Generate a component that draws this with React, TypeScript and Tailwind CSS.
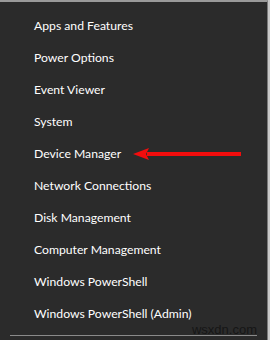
import React from "react";

const items = [
  "Apps and Features",
  "Power Options",
  "Event Viewer",
  "System",
  "Device Manager",
  "Network Connections",
  "Disk Management",
  "Computer Management",
  "Windows PowerShell",
  "Windows PowerShell (Admin)",
];

// red annotation arrow pointing at the menu entry
function Arrow() {
  return (
    <svg width="110" height="14" viewBox="0 0 110 14" className="absolute left-[133px] top-[145px]">
      <rect x="14" y="5" width="94" height="4" fill="#f20d0d" />
      <polygon points="0,7 16,1 13,7 16,13" fill="#f20d0d" />
    </svg>
  );
}

export default function App() {
  return (
    <div className="w-[270px] h-[340px] bg-[#c8c8c8] overflow-hidden">
      <div
        className="relative w-[268px] h-[340px] bg-[#2b2b2b] border-t-2 border-t-[#9a9a9a] border-r border-r-[#7a7a7a] text-white"
        style={{ fontFamily: 'Lato, "Noto Sans", sans-serif' }}
      >
        <ul className="pt-[8px] pl-[34px] flex flex-col">
          {items.map((label) => (
            <li key={label} className="h-[32px] flex items-center text-[12.2px] leading-none">
              {label}
            </li>
          ))}
        </ul>
        <div className="mx-[10px] mt-[5px] h-px bg-[#8a8a8a]" />
        <Arrow />
        <span
          className="absolute right-[10px] bottom-[4px] text-[13px] leading-none text-[#161616]"
          style={{ fontFamily: '"Liberation Sans", Arial, sans-serif' }}
        >
          wsxdn.com
        </span>
      </div>
    </div>
  );
}
